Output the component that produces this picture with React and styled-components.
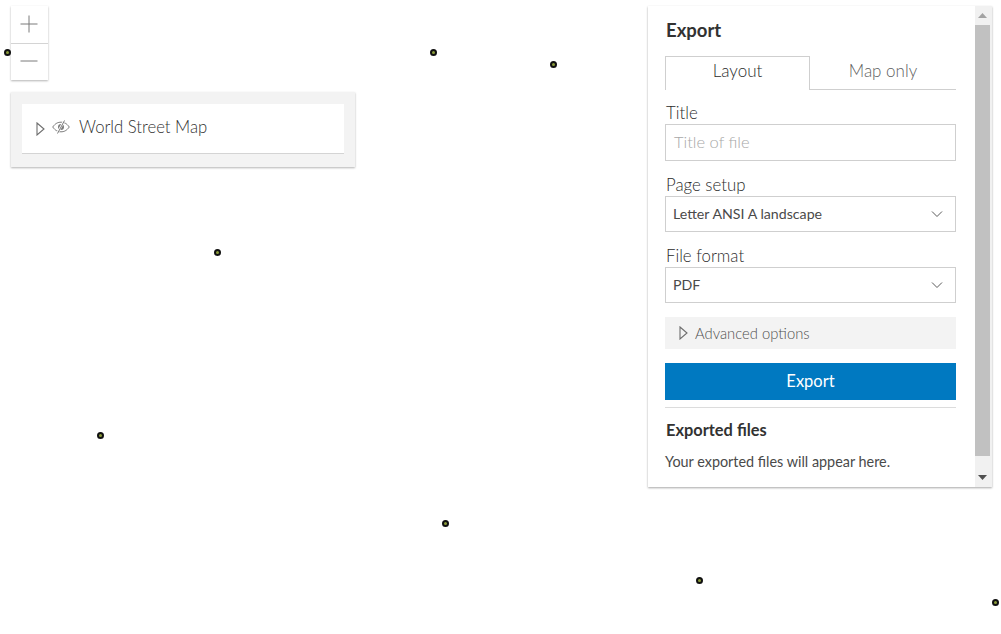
import React from 'react'
import styled, { createGlobalStyle } from 'styled-components'

const GlobalStyle = createGlobalStyle`
  html, body {
    margin: 0;
    padding: 0;
    background: #fff;
    font-family: Lato, "Noto Sans", sans-serif;
    color: #323232;
  }
  * {
    box-sizing: border-box;
  }
`

const MapView = styled.div`
  position: relative;
  width: 1001px;
  height: 634px;
  overflow: hidden;
  background: #fff;
`

const Point = styled.span`
  position: absolute;
  width: 7px;
  height: 7px;
  border-radius: 50%;
  background: #8a9a3a;
  border: 2px solid #111;
`

const LeftColumn = styled.div`
  position: absolute;
  top: 6px;
  left: 11px;
  display: flex;
  flex-direction: column;
  gap: 12px;
`

const ZoomGroup = styled.div`
  display: flex;
  flex-direction: column;
  width: 37px;
  background: #fff;
  box-shadow: 0 1px 2px rgba(0, 0, 0, 0.3);
`

const ZoomButton = styled.div`
  display: flex;
  align-items: center;
  justify-content: center;
  height: 37px;
  padding: 0 2px 2px 0;
  & + & {
    border-top: 1px solid #d4d4d4;
  }
`

const LayerPanel = styled.div`
  width: 344px;
  height: 75px;
  padding: 12px 11px 13px;
  background: #f3f3f3;
  box-shadow: 0 1px 2px rgba(0, 0, 0, 0.3);
`

const LayerRow = styled.div`
  display: flex;
  align-items: center;
  height: 50px;
  padding: 0 14px;
  background: #fff;
  border-bottom: 1px solid #d4d4d4;
`

const LayerName = styled.span`
  margin-left: 9px;
  padding-bottom: 4px;
  font-size: 16.7px;
  font-weight: 300;
  color: #323232;
`

const EyeIcon = styled.svg`
  margin: 0 0 3px 7px;
`

const ExportPanel = styled.div`
  position: absolute;
  top: 6px;
  left: 648px;
  display: flex;
  width: 344px;
  height: 481px;
  background: #fff;
  box-shadow: 0 1px 2px rgba(0, 0, 0, 0.35);
`

const PanelBody = styled.div`
  flex: 1;
  padding: 13px 19px 0 17px;
`

const PanelTitle = styled.h2`
  margin: 0 0 14px 1px;
  font-size: 18.5px;
  line-height: 23px;
  font-weight: 700;
  color: #323232;
`

const Tabs = styled.div`
  display: flex;
  height: 34px;
  margin-bottom: 13px;
`

const Tab = styled.div`
  display: flex;
  align-items: center;
  justify-content: center;
  flex: ${props => (props.$active ? '0 0 145px' : '1')};
  padding-bottom: ${props => (props.$active ? '7px' : '5px')};
  font-size: 17px;
  font-weight: 300;
  color: ${props => (props.$active ? '#2b2b2b' : '#5f5f5f')};
  border: 1px solid #cfcfcf;
  border-width: ${props => (props.$active ? '1px 1px 0 1px' : '0 0 1px 0')};
`

const Fields = styled.div`
  display: flex;
  flex-direction: column;
  gap: 14px;
`

const Label = styled.div`
  height: 21px;
  padding-left: 1px;
  font-size: 16.8px;
  line-height: 20px;
  font-weight: 300;
  color: #2b2b2b;
`

const Input = styled.div`
  display: flex;
  align-items: center;
  height: 37px;
  padding: 0 8px 2px;
  border: 1px solid #cfcfcf;
  font-size: 16.5px;
  font-weight: 300;
  color: #a8a8a8;
`

const Select = styled.div`
  display: flex;
  align-items: center;
  justify-content: space-between;
  height: 36px;
  padding: 0 12px 1px 7px;
  border: 1px solid #cfcfcf;
  font-size: 14.2px;
  color: #4a4a4a;
`

const Advanced = styled.div`
  display: flex;
  align-items: center;
  gap: 7px;
  height: 32px;
  margin-top: 14px;
  padding-left: 14px;
  background: #f3f3f3;
  font-size: 14.8px;
  font-weight: 300;
  color: #505050;
`

const ExportButton = styled.div`
  display: flex;
  align-items: center;
  justify-content: center;
  height: 37px;
  margin-top: 14px;
  padding-bottom: 2px;
  background: #0079c1;
  color: #fff;
  font-size: 16.5px;
  font-weight: 400;
`

const Divider = styled.div`
  height: 1px;
  margin: 7px 0 12px;
  background: #dcdcdc;
`

const SectionTitle = styled.div`
  padding-left: 1px;
  font-size: 16.4px;
  line-height: 20px;
  font-weight: 700;
  color: #323232;
`

const Hint = styled.div`
  margin-top: 13px;
  font-size: 14.4px;
  line-height: 18px;
  color: #4a4a4a;
`

const Scrollbar = styled.div`
  display: flex;
  flex-direction: column;
  width: 17px;
  background: #f1f1f1;
`

const ScrollArrow = styled.div`
  display: flex;
  align-items: center;
  justify-content: center;
  width: 15px;
  height: 19px;
  flex: none;
`

const ScrollThumb = styled.div`
  width: 15px;
  height: 431px;
  background: #c1c1c1;
`

const ScrollTrack = styled.div`
  flex: 1;
`

const points = [
  [7, 52],
  [433, 52],
  [553, 64],
  [217, 252],
  [100, 435],
  [445, 523],
  [651, 287],
  [699, 580],
  [995, 602]
]

const Triangle = () => (
  <svg width='9' height='14' viewBox='0 0 9 14' fill='none' stroke='#6e6e6e' strokeWidth='1.1'>
    <path d='M1 1 L8 7 L1 13 Z' />
  </svg>
)

const Chevron = () => (
  <svg width='12' height='8' viewBox='0 0 12 8' fill='none' stroke='#5a5a5a' strokeWidth='1'>
    <path d='M1 1.5 L6 6.5 L11 1.5' />
  </svg>
)

const EyeOff = () => (
  <EyeIcon width='18' height='14' viewBox='0 0 18 14' fill='none' stroke='#7a7a7a' strokeWidth='1'>
    <path d='M0.7 7 C3.5 3.2 6 2.2 9 2.2 C12 2.2 14.5 3.2 17.3 7 C14.5 10.8 12 11.8 9 11.8 C6 11.8 3.5 10.8 0.7 7 Z' />
    <circle cx='9' cy='7' r='3' fill='#7a7a7a' stroke='none' />
    <path d='M12 1 L5.5 13' stroke='#fff' strokeWidth='2.2' />
    <path d='M12.5 0.5 L5.5 13.5' />
  </EyeIcon>
)

const App = () => (
  <MapView>
    <GlobalStyle />
    {points.map(([x, y]) => (
      <Point key={x} style={{ left: x - 3.5, top: y - 3.5 }} />
    ))}
    <LeftColumn>
      <ZoomGroup>
        <ZoomButton>
          <svg width='18' height='18' viewBox='0 0 18 18' stroke='#7a7a7a' strokeWidth='1'>
            <path d='M9 0.5 V17.5 M0.5 9 H17.5' />
          </svg>
        </ZoomButton>
        <ZoomButton>
          <svg width='18' height='18' viewBox='0 0 18 18' stroke='#7a7a7a' strokeWidth='1'>
            <path d='M0.5 9 H17.5' />
          </svg>
        </ZoomButton>
      </ZoomGroup>
      <LayerPanel>
        <LayerRow>
          <Triangle />
          <EyeOff />
          <LayerName>World Street Map</LayerName>
        </LayerRow>
      </LayerPanel>
    </LeftColumn>
    <ExportPanel>
      <PanelBody>
        <PanelTitle>Export</PanelTitle>
        <Tabs>
          <Tab $active>Layout</Tab>
          <Tab>Map only</Tab>
        </Tabs>
        <Fields>
          <div>
            <Label>Title</Label>
            <Input>Title of file</Input>
          </div>
          <div>
            <Label>Page setup</Label>
            <Select>
              Letter ANSI A landscape
              <Chevron />
            </Select>
          </div>
          <div>
            <Label>File format</Label>
            <Select>
              PDF
              <Chevron />
            </Select>
          </div>
        </Fields>
        <Advanced>
          <Triangle />
          Advanced options
        </Advanced>
        <ExportButton>Export</ExportButton>
        <Divider />
        <SectionTitle>Exported files</SectionTitle>
        <Hint>Your exported files will appear here.</Hint>
      </PanelBody>
      <Scrollbar>
        <ScrollArrow>
          <svg width='9' height='5' viewBox='0 0 9 5' fill='#a3a3a3'>
            <path d='M4.5 0 L9 5 H0 Z' />
          </svg>
        </ScrollArrow>
        <ScrollThumb />
        <ScrollTrack />
        <ScrollArrow>
          <svg width='9' height='5' viewBox='0 0 9 5' fill='#505050'>
            <path d='M0 0 H9 L4.5 5 Z' />
          </svg>
        </ScrollArrow>
      </Scrollbar>
    </ExportPanel>
  </MapView>
)

export default App
